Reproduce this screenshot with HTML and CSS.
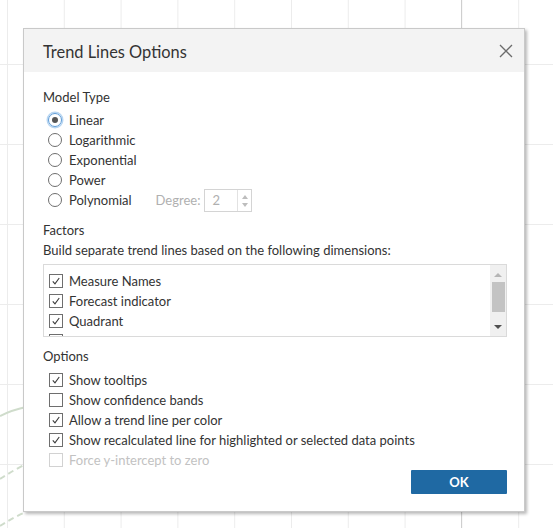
FILE: index.html
```html
<!DOCTYPE html>
<html>
<head>
<meta charset="utf-8">
<link rel="stylesheet" href="styles.css">
</head>
<body>
<svg class="chart-curves" width="40" height="160" viewBox="0 380 40 160">
  <path d="M0 416 Q12 410 26 407" class="curve"/>
  <path d="M0 479 Q12 471 26 464" class="curve dashed"/>
  <path d="M0 526 Q12 518 26 512" class="curve dashed"/>
</svg>

<div class="dialog">
  <div class="dialog-header">
    <span class="dialog-title">Trend Lines Options</span>
    <svg class="close-icon" width="14" height="14" viewBox="0 0 14 14"><path d="M1 1 L13 13 M13 1 L1 13"/></svg>
  </div>
  <div class="dialog-body">
    <div class="section-title">Model Type</div>
    <div class="row"><span class="radio checked"></span><span>Linear</span></div>
    <div class="row"><span class="radio"></span><span>Logarithmic</span></div>
    <div class="row"><span class="radio"></span><span>Exponential</span></div>
    <div class="row"><span class="radio"></span><span>Power</span></div>
    <div class="row"><span class="radio"></span><span>Polynomial</span>
      <span class="degree-label">Degree:</span>
      <span class="spinner"><span class="spinner-value">2</span><span class="spinner-btns"><span class="tri-up"></span><span class="tri-down"></span></span></span>
    </div>

    <div class="section-title factors">Factors</div>
    <div class="desc">Build separate trend lines based on the following dimensions:</div>
    <div class="list">
      <div class="list-items">
        <div class="row"><span class="check on"><svg viewBox="0 0 13 13"><path d="M3 6.8 L5.4 9.6 L10 3.2"/></svg></span><span>Measure Names</span></div>
        <div class="row"><span class="check on"><svg viewBox="0 0 13 13"><path d="M3 6.8 L5.4 9.6 L10 3.2"/></svg></span><span>Forecast indicator</span></div>
        <div class="row"><span class="check on"><svg viewBox="0 0 13 13"><path d="M3 6.8 L5.4 9.6 L10 3.2"/></svg></span><span>Quadrant</span></div>
        <div class="row"><span class="check"></span><span>Select Rank</span></div>
      </div>
      <div class="scrollbar">
        <span class="sb-up"></span>
        <span class="sb-thumb"></span>
        <span class="sb-down"></span>
      </div>
    </div>

    <div class="section-title options">Options</div>
    <div class="row"><span class="check on"><svg viewBox="0 0 13 13"><path d="M3 6.8 L5.4 9.6 L10 3.2"/></svg></span><span>Show tooltips</span></div>
    <div class="row"><span class="check"></span><span>Show confidence bands</span></div>
    <div class="row"><span class="check on"><svg viewBox="0 0 13 13"><path d="M3 6.8 L5.4 9.6 L10 3.2"/></svg></span><span>Allow a trend line per color</span></div>
    <div class="row"><span class="check on"><svg viewBox="0 0 13 13"><path d="M3 6.8 L5.4 9.6 L10 3.2"/></svg></span><span>Show recalculated line for highlighted or selected data points</span></div>
    <div class="row disabled"><span class="check"></span><span>Force y-intercept to zero</span></div>

    <div class="footer"><button class="ok-btn">OK</button></div>
  </div>
</div>
</body>
</html>
```
FILE: styles.css
```css
html, body {
  margin: 0;
  padding: 0;
}
body {
  width: 553px;
  height: 528px;
  position: relative;
  overflow: hidden;
  background-color: #fff;
  background-image:
    linear-gradient(to right, #cfcfcf 1px, transparent 1px),
    linear-gradient(to right, #ececec 1px, transparent 1px),
    linear-gradient(to bottom, #ececec 1px, transparent 1px);
  background-size: 1px 100%, 56.8px 100%, 100% 80px;
  background-position: 461px 0, 7px 0, 0 64px;
  background-repeat: no-repeat, repeat-x, repeat-y;
  font-family: "Lato", "Liberation Sans", sans-serif;
  color: #333;
  font-size: 13px;
}
.chart-curves {
  position: absolute;
  left: 0;
  top: 380px;
}
.curve {
  fill: none;
  stroke: #cfdccb;
  stroke-width: 2;
}
.curve.dashed {
  stroke-dasharray: 6 4;
}

.dialog {
  position: absolute;
  left: 23px;
  top: 28px;
  width: 500px;
  height: 482px;
  background: #fff;
  border: 1px solid #c9c9c9;
  box-shadow: 2px 2px 3px rgba(0, 0, 0, 0.28);
  display: flex;
  flex-direction: column;
}
.dialog-header {
  height: 43px;
  background: #f3f3f3;
  display: flex;
  align-items: center;
  justify-content: space-between;
  padding: 0 11px 0 19px;
}
.dialog-title {
  font-size: 16.4px;
  color: #333;
  padding-top: 1px;
}
.close-icon path {
  stroke: #6b6b6b;
  stroke-width: 1.3;
  fill: none;
}
.dialog-body {
  padding: 15px 17px 0 19px;
  display: flex;
  flex-direction: column;
}
.section-title {
  height: 20px;
  line-height: 20px;
  margin-bottom: 3px;
}
.section-title.factors {
  margin-top: 10px;
  margin-bottom: 0;
}
.section-title.options {
  margin-top: 9px;
  margin-bottom: 4px;
}
.desc {
  height: 20px;
  line-height: 20px;
  margin-bottom: 4px;
}
.row {
  height: 20px;
  display: flex;
  align-items: center;
  white-space: nowrap;
  line-height: 20px;
}
.radio {
  width: 12px;
  height: 12px;
  border: 1px solid #6e6e6e;
  border-radius: 50%;
  margin-left: 5px;
  margin-right: 7px;
  box-sizing: content-box;
  display: flex;
  align-items: center;
  justify-content: center;
  flex: none;
}
.radio.checked {
  border-color: #5e9bd6;
  box-shadow: 0 0 0 1.5px #b8d6f2;
}
.radio.checked::after {
  content: "";
  width: 6px;
  height: 6px;
  border-radius: 50%;
  background: #555;
}
.degree-label {
  color: #b0b0b0;
  margin-left: 24px;
  margin-right: 4px;
}
.spinner {
  width: 46px;
  height: 21px;
  border: 1px solid #d4d4d4;
  display: flex;
  box-sizing: content-box;
}
.spinner-value {
  flex: 1;
  color: #b0b0b0;
  padding-left: 7px;
  line-height: 21px;
}
.spinner-btns {
  width: 14px;
  border-left: 1px solid #e2e2e2;
  display: flex;
  flex-direction: column;
  align-items: center;
  justify-content: space-between;
  padding: 5px 0 4px;
  box-sizing: border-box;
}
.tri-up {
  width: 0;
  height: 0;
  border-left: 3.5px solid transparent;
  border-right: 3.5px solid transparent;
  border-bottom: 4px solid #bdbdbd;
}
.tri-down {
  width: 0;
  height: 0;
  border-left: 3.5px solid transparent;
  border-right: 3.5px solid transparent;
  border-top: 4px solid #bdbdbd;
}
.check {
  width: 12px;
  height: 12px;
  border: 1px solid #6e6e6e;
  margin-left: 6px;
  margin-right: 6px;
  box-sizing: content-box;
  flex: none;
  display: flex;
}
.check svg {
  width: 12px;
  height: 12px;
}
.check svg path {
  fill: none;
  stroke: #3a3a3a;
  stroke-width: 1.2;
}
.disabled {
  color: #c2c2c2;
}
.disabled .check {
  border-color: #d2d2d2;
}

.list {
  height: 71px;
  border: 1px solid #dadada;
  display: flex;
  overflow: hidden;
}
.list-items {
  flex: 1;
  padding-top: 6px;
}
.list-items .check {
  margin-left: 5px;
}
.scrollbar {
  width: 16px;
  background: #f0f0f0;
  display: flex;
  flex-direction: column;
  align-items: center;
  position: relative;
}
.sb-up {
  margin-top: 8px;
  width: 0;
  height: 0;
  border-left: 4px solid transparent;
  border-right: 4px solid transparent;
  border-bottom: 4px solid #b5b5b5;
}
.sb-thumb {
  margin-top: 5px;
  width: 13px;
  height: 30px;
  background: #c3c3c3;
}
.sb-down {
  margin-top: 13px;
  width: 0;
  height: 0;
  border-left: 4px solid transparent;
  border-right: 4px solid transparent;
  border-top: 4px solid #505050;
}

.footer {
  display: flex;
  justify-content: flex-end;
}
.ok-btn {
  width: 96px;
  height: 24px;
  background: #1f69a3;
  color: #fff;
  border: none;
  border-radius: 1px;
  font-family: "Lato", "Liberation Sans", sans-serif;
  font-weight: bold;
  font-size: 13px;
  padding: 0;
}
```
